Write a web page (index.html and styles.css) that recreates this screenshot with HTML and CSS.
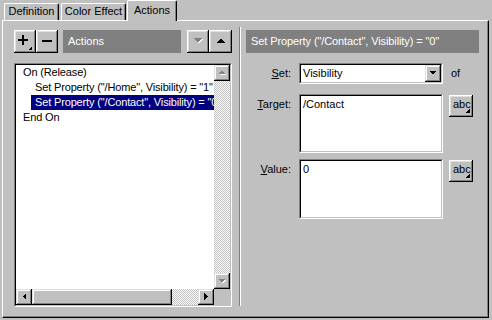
FILE: index.html
```html
<!DOCTYPE html>
<html>
<head lang="en">
    <meta charset="UTF-8">
    <title>Actions</title>
    <link rel="stylesheet" href="styles.css">
</head>
<body>
<div class="window">
    <div class="tabs">
        <div class="tab tab-def">Definition</div>
        <div class="tab tab-color">Color Effect</div>
        <div class="tab tab-actions current">Actions</div>
    </div>
    <div class="pane">
        <div class="left">
            <div class="toolbar">
                <div class="tool">
                    <svg width="22" height="23" shape-rendering="crispEdges">
                        <rect x="4" y="9" width="10" height="2" fill="#000"/>
                        <rect x="8" y="5" width="2" height="10" fill="#000"/>
                        <polygon points="14,20 18,16 18,20" fill="#000"/>
                    </svg>
                </div>
                <div class="tool">
                    <svg width="22" height="23" shape-rendering="crispEdges">
                        <rect x="6" y="10" width="10" height="2" fill="#000"/>
                    </svg>
                </div>
                <div class="caption caption-left">Actions</div>
                <div class="tool">
                    <svg width="22" height="23" shape-rendering="crispEdges">
                        <polygon points="7,9 16,9 11.5,13.5" fill="#fff"/>
                        <polygon points="6,8 15,8 10.5,12.5" fill="#808080"/>
                    </svg>
                </div>
                <div class="tool tool-up">
                    <svg width="23" height="23" shape-rendering="crispEdges">
                        <polygon points="7,13 16,13 11.5,8.5" fill="#000"/>
                    </svg>
                </div>
            </div>
            <div class="listbox">
                <div class="listinner">
                    <div class="rows">
                        <div class="row">On (Release)</div>
                        <div class="row sub">Set Property ("/Home", Visibility) = "1"</div>
                        <div class="row sub selected">Set Property ("/Contact", Visibility) = "0"</div>
                        <div class="row">End On</div>
                    </div>
                    <div class="vscroll">
                        <div class="sbtn">
                            <svg width="16" height="16" shape-rendering="crispEdges">
                                <polygon points="5,10 12,10 8.5,6.5" fill="#fff"/>
                                <polygon points="4,9 11,9 7.5,5.5" fill="#808080"/>
                            </svg>
                        </div>
                        <div class="track"></div>
                        <div class="sbtn">
                            <svg width="16" height="16" shape-rendering="crispEdges">
                                <polygon points="5,7 12,7 8.5,10.5" fill="#fff"/>
                                <polygon points="4,6 11,6 7.5,9.5" fill="#808080"/>
                            </svg>
                        </div>
                    </div>
                    <div class="hscroll">
                        <div class="sbtn">
                            <svg width="16" height="16" shape-rendering="crispEdges">
                                <polygon points="10,4 10,11 6.5,7.5" fill="#000"/>
                            </svg>
                        </div>
                        <div class="thumb"></div>
                        <div class="track"></div>
                        <div class="sbtn">
                            <svg width="16" height="16" shape-rendering="crispEdges">
                                <polygon points="6,4 6,11 9.5,7.5" fill="#000"/>
                            </svg>
                        </div>
                    </div>
                    <div class="corner"></div>
                </div>
            </div>
        </div>
        <div class="divider"></div>
        <div class="right">
            <div class="caption caption-right">Set Property ("/Contact", Visibility) = "0"</div>
            <div class="frow frow-set">
                <div class="label label-set"><u>S</u>et:</div>
                <div class="select">
                    <div class="select-in">
                        <div class="select-text">Visibility</div>
                        <div class="sbtn">
                            <svg width="16" height="17" shape-rendering="crispEdges">
                                <polygon points="4,6 11,6 7.5,9.5" fill="#000"/>
                            </svg>
                        </div>
                    </div>
                </div>
                <div class="of">of</div>
            </div>
            <div class="frow frow-target">
                <div class="label"><u>T</u>arget:</div>
                <div class="field field-target">
                    <div class="field-in">/Contact</div>
                </div>
                <div class="abc">abc</div>
            </div>
            <div class="frow frow-value">
                <div class="label"><u>V</u>alue:</div>
                <div class="field field-value">
                    <div class="field-in">0</div>
                </div>
                <div class="abc">abc</div>
            </div>
        </div>
    </div>
</div>
</body>
</html>
```

FILE: styles.css
```css
* {
    padding: 0;
    margin: 0;
    box-sizing: border-box;
}

body {
    background: #c0c0c0;
    font-family: "Liberation Sans", Arial, sans-serif;
    font-size: 11px;
    color: #000;
}

.window {
    width: 492px;
    height: 320px;
}

svg {
    display: block;
}

/* tabs */
.tabs {
    display: flex;
    align-items: flex-end;
    height: 20px;
    padding-left: 4px;
}

.tab {
    height: 17px;
    border-top: 1px solid #fff;
    border-left: 1px solid #fff;
    border-right: 1px solid #000;
    border-radius: 2px 2px 0 0;
    box-shadow: inset -1px 0 #808080;
    text-align: center;
    line-height: 15px;
    white-space: nowrap;
}

.tab-def {
    width: 55px;
}

.tab-color {
    width: 65px;
    margin-left: 2px;
}

.tab-actions {
    width: 50px;
    margin-left: 1px;
}

.tab.current {
    height: 21px;
    margin-bottom: -1px;
    line-height: 18px;
    background: #c0c0c0;
    position: relative;
}

/* pane */
.pane {
    margin-left: 2px;
    width: 487px;
    height: 298px;
    border: 1px solid;
    border-color: #fff #000 #000 #fff;
    box-shadow: inset -1px -1px #808080;
    display: flex;
    padding: 9px 0 0 11px;
}

.left {
    width: 218px;
    display: flex;
    flex-direction: column;
}

.toolbar {
    display: flex;
    height: 23px;
}

.tool {
    width: 22px;
    height: 23px;
    box-shadow: inset -1px -1px #000, inset 1px 1px #fff, inset -2px -2px #808080, inset 2px 2px #dfdfdf;
}

.tool-up {
    width: 23px;
}

.caption {
    background: #808080;
    color: #fff;
    height: 23px;
    line-height: 23px;
    white-space: nowrap;
    overflow: hidden;
}

.caption-left {
    flex: 1;
    margin: 0 6px 0 5px;
    padding-left: 5px;
}

.caption-right {
    padding-left: 5px;
    letter-spacing: -0.1px;
}

/* list */
.listbox {
    margin-top: 10px;
    height: 244px;
    border: 1px solid;
    border-color: #808080 #fff #fff #808080;
}

.listinner {
    height: 100%;
    border: 1px solid;
    border-color: #000 #c0c0c0 #c0c0c0 #000;
    display: grid;
    grid-template-columns: 198px 16px;
    grid-template-rows: 224px 16px;
}

.rows {
    background: #fff;
    overflow: hidden;
    letter-spacing: -0.15px;
}

.row {
    height: 15px;
    line-height: 15px;
    white-space: nowrap;
    padding-left: 7px;
}

.row.sub {
    margin-left: 15px;
    padding-left: 4px;
}

.row.selected {
    background: #000080;
    color: #fff;
}

.vscroll {
    display: flex;
    flex-direction: column;
}

.hscroll {
    display: flex;
}

.sbtn {
    width: 16px;
    height: 16px;
    flex: none;
    background: #c0c0c0;
    box-shadow: inset -1px -1px #000, inset 1px 1px #dfdfdf, inset -2px -2px #808080, inset 2px 2px #fff;
}

.track {
    flex: 1;
    background: repeating-conic-gradient(#c0c0c0 0 25%, #fff 0 50%) 0 0 / 2px 2px;
}

.thumb {
    width: 140px;
    flex: none;
    box-shadow: inset -1px -1px #000, inset 1px 1px #dfdfdf, inset -2px -2px #808080, inset 2px 2px #fff;
}

.corner {
    background: #c0c0c0;
}

.divider {
    width: 2px;
    margin: -3px 5px 11px 7px;
    border-left: 1px solid #808080;
    border-right: 1px solid #fff;
}

/* right side */
.right {
    width: 233px;
    display: flex;
    flex-direction: column;
}

.frow {
    display: flex;
}

.frow-set {
    margin-top: 10px;
    height: 21px;
}

.frow-target {
    margin-top: 10px;
}

.frow-value {
    margin-top: 6px;
}

.label {
    width: 53px;
    padding-right: 8px;
    text-align: right;
    line-height: 14px;
    padding-top: 3px;
    white-space: nowrap;
}

.label-set {
    line-height: 21px;
    padding-top: 0;
}

.select {
    width: 144px;
    height: 21px;
    border: 1px solid;
    border-color: #808080 #fff #fff #808080;
}

.select-in {
    height: 100%;
    border: 1px solid;
    border-color: #000 #c0c0c0 #c0c0c0 #000;
    background: #fff;
    display: flex;
}

.select-text {
    flex: 1;
    padding-left: 2px;
    line-height: 17px;
}

.select-in .sbtn {
    height: 17px;
}

.of {
    padding-left: 8px;
    line-height: 21px;
}

.field {
    width: 144px;
    border: 1px solid;
    border-color: #808080 #fff #fff #808080;
}

.field-target {
    height: 59px;
}

.field-value {
    height: 60px;
}

.field-in {
    height: 100%;
    border: 1px solid;
    border-color: #000 #c0c0c0 #c0c0c0 #000;
    background: #fff;
    padding: 1px 2px 0 2px;
    line-height: 14px;
}

.abc {
    width: 24px;
    height: 22px;
    margin: 1px 0 0 6px;
    padding-left: 4px;
    line-height: 19px;
    background: linear-gradient(135deg, transparent 50%, #000 50%) right 3px bottom 4px / 4px 4px no-repeat #c0c0c0;
    box-shadow: inset -1px -1px #000, inset 1px 1px #fff, inset -2px -2px #808080, inset 2px 2px #dfdfdf;
}
```
